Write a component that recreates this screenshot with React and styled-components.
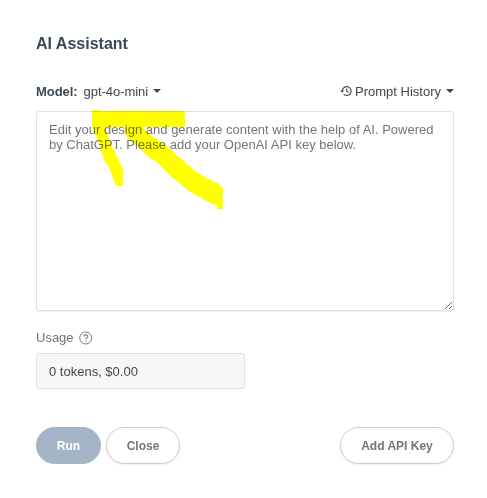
import React from 'react'
import styled, { createGlobalStyle } from 'styled-components'

const GlobalStyle = createGlobalStyle`
    * {
        box-sizing: border-box;
    }
    body {
        margin: 0;
        background: #fff;
        color: #3d4852;
        font-family: 'Liberation Sans', Arial, sans-serif;
        font-size: 13px;
    }
`
const Dialog = styled.main`
    position: relative;
    width: 487px;
    height: 498px;
    padding: 34px 33px 0 36px;
`
const Title = styled.h1`
    margin: 0;
    font-size: 16px;
    line-height: 20px;
    font-weight: 700;
`
const Toolbar = styled.div`
    display: flex;
    justify-content: space-between;
    align-items: center;
    height: 20px;
    margin: 27px 0 10px;
`
const Picker = styled.div`
    display: flex;
    align-items: center;
    letter-spacing: ${({ $spacing }) => $spacing || 'normal'};
`
const Label = styled.strong`
    margin-right: 6px;
`
const Caret = styled.span`
    margin-left: 5px;
    border: 4px solid transparent;
    border-top-color: #3d4852;
    border-bottom: 0;
`
const HistoryIcon = styled.svg`
    width: 12px;
    height: 12px;
    margin-right: 3px;
`
const Prompt = styled.textarea`
    display: block;
    width: 418px;
    height: 200px;
    margin: 0;
    padding: 10px 12px;
    border: 1px solid #dee0e1;
    border-radius: 3px;
    outline: 0;
    box-shadow: 0 1px 0 rgba(0, 0, 0, 0.05);
    resize: both;
    font: 13px/15px 'Liberation Sans', Arial, sans-serif;
    &::placeholder {
        color: #757575;
    }
`
const UsageLabel = styled.div`
    display: flex;
    align-items: center;
    height: 20px;
    margin-top: 16px;
    color: #6b737b;
`
const HelpIcon = styled.svg`
    width: 14px;
    height: 14px;
    margin: 1px 0 0 5px;
`
const Usage = styled.div`
    display: flex;
    align-items: center;
    width: 209px;
    height: 36px;
    margin-top: 6px;
    padding-left: 12px;
    border: 1px solid #e0e1e2;
    border-radius: 3px;
    background: #f7f7f7;
`
const Footer = styled.footer`
    display: flex;
    gap: 5px;
    margin-top: 38px;
`
const Button = styled.button`
    width: ${({ $width }) => $width}px;
    height: 37px;
    padding: 0;
    border: 1px solid ${({ $primary }) => ($primary ? '#a5b5c8' : '#cbcbcb')};
    border-radius: 19px;
    background: ${({ $primary }) => ($primary ? '#a5b5c8' : '#fff')};
    box-shadow: ${({ $primary }) => ($primary ? 'none' : '0 1px 2px rgba(0, 0, 0, 0.08)')};
    color: ${({ $primary }) => ($primary ? '#fff' : '#757575')};
    font: 700 12px 'Liberation Sans', Arial, sans-serif;
    &:last-child {
        margin-left: auto;
    }
`
const Highlight = styled.svg`
    position: absolute;
    top: 0;
    left: 0;
    pointer-events: none;
    mix-blend-mode: multiply;
`

const App = () => {
    return (
        <>
            <GlobalStyle />
            <Dialog>
                <Title>AI Assistant</Title>
                <Toolbar>
                    <Picker $spacing="-0.05px">
                        <Label>Model:</Label>
                        gpt-4o-mini
                        <Caret />
                    </Picker>
                    <Picker>
                        <HistoryIcon viewBox="0 0 12 12" fill="none" stroke="#3d4852" strokeWidth="1.1">
                            <path d="M2.3 6A4.4 4.4 0 1 1 3.6 9.2M6.7 3.5V6.3L8.6 7.4" />
                            <path d="M0.2 5.5H4.2L2.2 7.7Z" fill="#3d4852" stroke="none" />
                        </HistoryIcon>
                        Prompt History
                        <Caret />
                    </Picker>
                </Toolbar>
                <Prompt placeholder="Edit your design and generate content with the help of AI. Powered by ChatGPT. Please add your OpenAI API key below." />
                <UsageLabel>
                    Usage
                    <HelpIcon viewBox="0 0 14 14" fill="none" stroke="#75818c">
                        <circle cx="6.7" cy="7" r="6" />
                        <path d="M4.9 5.6C4.9 3.3 8.7 3.3 8.7 5.5C8.7 6.9 6.8 6.8 6.8 8.3M6.8 9.4V10.6" strokeWidth="1.2" />
                    </HelpIcon>
                </UsageLabel>
                <Usage>0 tokens, $0.00</Usage>
                <Footer>
                    <Button $primary $width={65}>Run</Button>
                    <Button $width={74}>Close</Button>
                    <Button $width={114}>Add API Key</Button>
                </Footer>
                <Highlight width="487" height="498" fill="#ff0" shapeRendering="crispEdges">
                    <path d="M92 111L93 110H99V111H185V127H142L150 135L161 142L170 149L180 158L195 171L208 179L217 183L223 189V209H217V206L205 200L189 191L178 182L165 171L155 161L147 156L137 145L126 137L125 127H105L109 140L123 169V186H116L110 170L103 157L98 140L92 127Z" />
                </Highlight>
            </Dialog>
        </>
    )
}

export default App
